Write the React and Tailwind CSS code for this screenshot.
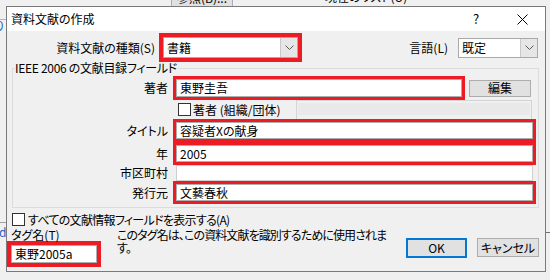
import React from "react";

/* ============ small pieces of the Windows dialog ============ */
const Chevron = () => (
  <svg width="9" height="5" viewBox="0 0 9 5">
    <polyline points="0.5,0.5 4.5,4.5 8.5,0.5" fill="none" stroke="#5a5a5a" strokeWidth="1" />
  </svg>
);

const Combo = ({ value, className }) => (
  <div className={`flex border border-[#a9a9a9] bg-white ${className}`}>
    <div className="flex-1 pl-[3px] flex items-center">{value}</div>
    <div className="w-[17px] flex items-center justify-center bg-[#e6e6e6] border-l border-[#c8c8c8]">
      <Chevron />
    </div>
  </div>
);

const Field = ({ value, className = "h-[17px]" }) => (
  <div className={`border border-[#adadad] bg-white pl-[3px] flex items-center whitespace-nowrap ${className}`}>
    {value}
  </div>
);

const Check = () => <div className="w-[13px] h-[13px] border border-[#333333] bg-white shrink-0" />;

const Btn = ({ children, className }) => (
  <div className={`flex items-center justify-center bg-[#e1e1e1] ${className}`}>{children}</div>
);

const RedRow = ({ label, value }) => (
  <div className="flex items-center h-[23px]">
    <div className="w-[155px] text-right">{label}</div>
    <div className="ml-[5px] w-[363px] h-[23px] border-[3px] border-[#ed1c24]">
      <Field value={value} />
    </div>
  </div>
);

export default function App() {
  return (
    <div className="relative w-[550px] h-[280px] overflow-hidden bg-[#f0f0f0] text-[12px] leading-[14px] text-black [font-family:'Noto_Sans_CJK_JP','Noto_Sans_CJK_SC',sans-serif] [font-feature-settings:'palt']">
      {/* ---------- window behind the dialog ---------- */}
      <div className="absolute left-[171px] top-[-12px] w-[62px] h-[19px] border border-[#adadad] bg-[#e1e1e1] flex items-center justify-center">
        参照(B)...
      </div>
      <div className="absolute left-[325px] top-[-10px]">現在のリスト(U)</div>
      <div className="absolute left-0 top-[19px] w-[6px] h-px bg-[#b4b4b4]" />
      <div className="absolute left-[-6px] top-[19px] text-[#1f5fbf]">り</div>
      <div className="absolute left-[-4px] top-[209px]">)</div>
      <div className="absolute left-0 top-[222px] w-[6px] h-px bg-[#a0a0a0]" />
      <div className="absolute left-[-1px] top-[225px] text-[#1f5fbf]">d</div>
      <div className="absolute left-[546px] top-[232px] w-[4px] h-px bg-[#707070]" />

      {/* ---------- dialog ---------- */}
      <div className="absolute left-[6px] top-[6px] w-[540px] h-[266px] border border-[#7a7a7a] bg-[#f0f0f0] flex flex-col">
        {/* title bar */}
        <div className="h-[24px] bg-white flex items-center shrink-0">
          <div className="pl-[4px]">資料文献の作成</div>
          <div className="ml-auto flex h-full">
            <div className="w-[46px] flex items-center justify-center text-[13px]">?</div>
            <div className="w-[46px] flex items-center justify-center">
              <svg width="11" height="11" viewBox="0 0 11 11">
                <path d="M0.5 0.5 L10.5 10.5 M10.5 0.5 L0.5 10.5" stroke="#000" strokeWidth="1" />
              </svg>
            </div>
          </div>
        </div>

        {/* type + language */}
        <div className="mt-[2px] flex items-center h-[29px]">
          <div className="w-[148px] text-right">資料文献の種類(S)</div>
          <div className="ml-[4px] w-[143px] h-[29px] border-4 border-[#ed1c24]">
            <Combo value="書籍" className="h-[21px]" />
          </div>
          <div className="ml-auto">言語(L)</div>
          <Combo value="既定" className="ml-[10px] mr-[7px] w-[80px] h-[20px]" />
        </div>

        {/* bibliography fields */}
        <fieldset className="ml-[5px] mr-[6px] border border-[#dcdcdc] pb-[3px]">
          <legend className="ml-[2px] leading-[12px] tracking-[-0.3px]">IEEE 2006 の文献目録フィールド</legend>

          <div className="mt-[2px] flex items-center h-[24px]">
            <div className="w-[155px] text-right">著者</div>
            <div className="ml-[5px] w-[292px] h-[24px] border-[3px] border-[#ed1c24]">
              <Field value="東野圭吾" className="h-[18px]" />
            </div>
            <Btn className="ml-[4px] w-[62px] h-[17px] border border-[#adadad]">編集</Btn>
          </div>

          <div className="flex items-center h-[19px]">
            <div className="ml-[165px]">
              <Check />
            </div>
            <div className="ml-[2px] whitespace-nowrap">著者 (組織/団体)</div>
            <div className="ml-auto mr-[6px] w-[236px] h-[19px] border-l border-t border-r border-[#d4d4d4] px-px pt-[2px]">
              <div className="h-[12px] bg-[#e9e9e9]" />
            </div>
          </div>

          <RedRow label="タイトル" value="容疑者Xの献身" />
          <RedRow label="年" value="2005" />

          <div className="flex items-center h-[16px]">
            <div className="w-[155px] text-right">市区町村</div>
            <div className="ml-[8px] w-[357px] h-[16px] border border-[#cfcfcf] bg-white" />
          </div>

          <RedRow label="発行元" value="文藝春秋" />
        </fieldset>

        {/* show all fields */}
        <div className="mt-[3px] ml-[5px] h-[17px] flex items-center">
          <Check />
          <div className="ml-[3px] tracking-[-0.7px]">すべての文献情報フィールドを表示する(A)</div>
        </div>

        {/* tag name + buttons */}
        <div className="flex">
          <div className="w-[94px]">
            <div className="mt-[1px] pl-[4px] leading-[12px]">タグ名(T)</div>
            <div className="h-[26px] border-4 border-[#ed1c24]">
              <Field value="東野2005a" className="h-[18px]" />
            </div>
          </div>
          <div className="ml-[16px] leading-[13px] whitespace-nowrap tracking-[-0.9px]">
            <div>このタグ名は、この資料文献を識別するために使用されま</div>
            <div>す。</div>
          </div>
          <div className="ml-auto mr-[6px] mt-[10px] flex items-start gap-[10px]">
            <Btn className="w-[61px] h-[20px] border-2 border-[#0078d7]">OK</Btn>
            <Btn className="w-[62px] h-[19px] border border-[#adadad]">キャンセル</Btn>
          </div>
        </div>
      </div>
    </div>
  );
}
